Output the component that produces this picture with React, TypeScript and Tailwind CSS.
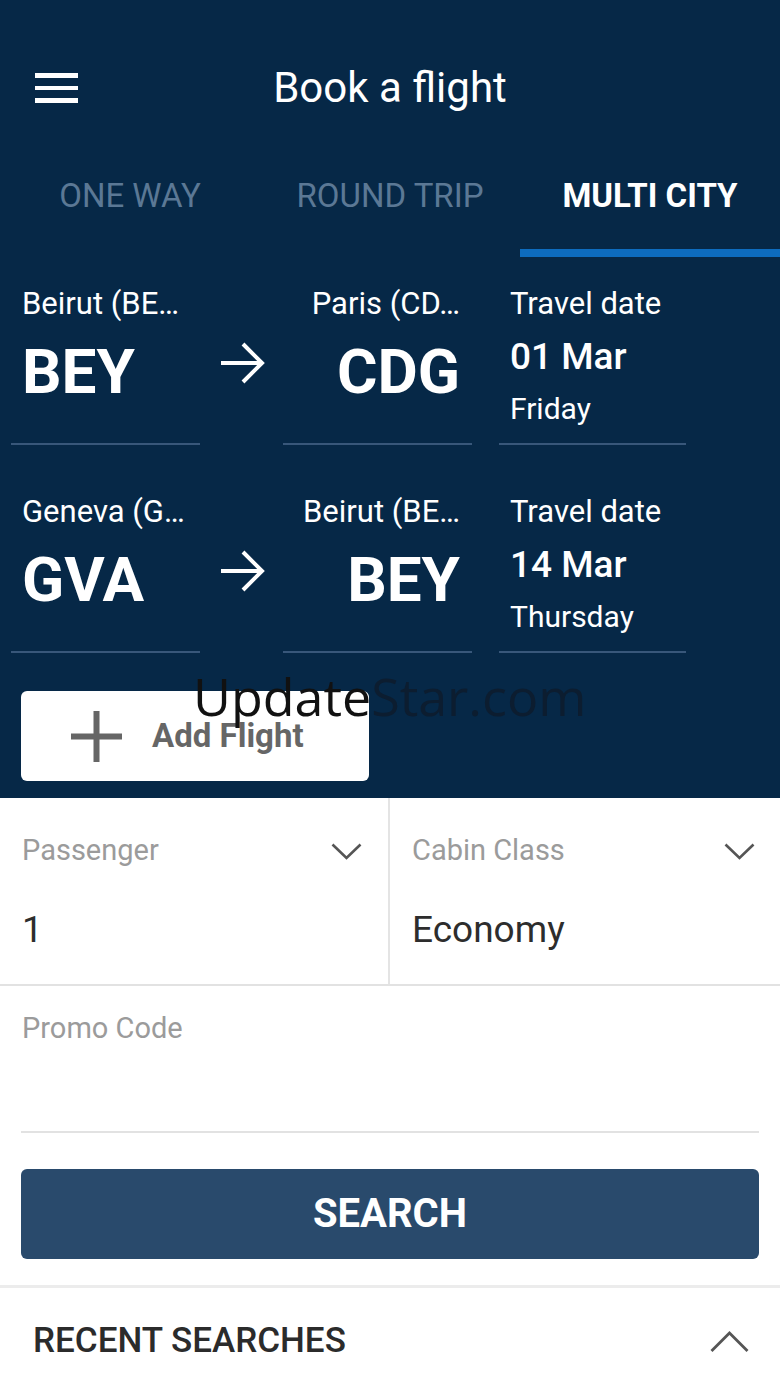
import React from 'react';

const navy = 'bg-[#062847]';

function Hamburger() {
  return (
    <div className="flex flex-col gap-[8px] w-[43px]">
      <span className="block h-[4.5px] bg-white" />
      <span className="block h-[4.5px] bg-white" />
      <span className="block h-[4.5px] bg-white" />
    </div>
  );
}

function ArrowIcon() {
  return (
    <svg width="46" height="44" viewBox="0 0 46 44" fill="none" stroke="white" strokeWidth="4">
      <path d="M2 22 H42" />
      <path d="M24 3 L43 22 L24 41" />
    </svg>
  );
}

function ChevronDown() {
  return (
    <svg width="31" height="17" viewBox="0 0 31 17" fill="none" stroke="#555" strokeWidth="2.6">
      <path d="M1.5 1.5 L15.5 15 L29.5 1.5" />
    </svg>
  );
}

function ChevronUp() {
  return (
    <svg width="39" height="22" viewBox="0 0 39 22" fill="none" stroke="#555" strokeWidth="2.8">
      <path d="M1.5 20 L19.5 2 L37.5 20" />
    </svg>
  );
}

function PlusIcon() {
  return (
    <svg width="51" height="51" viewBox="0 0 51 51" fill="#666">
      <rect x="22.5" y="0" width="6" height="51" />
      <rect x="0" y="22.5" width="51" height="6" />
    </svg>
  );
}

type Leg = { from: string; fromCode: string; to: string; toCode: string; date: string; day: string };

const legs: Leg[] = [
  { from: 'Beirut (BE…', fromCode: 'BEY', to: 'Paris (CD…', toCode: 'CDG', date: '01 Mar', day: 'Friday' },
  { from: 'Geneva (G…', fromCode: 'GVA', to: 'Beirut (BE…', toCode: 'BEY', date: '14 Mar', day: 'Thursday' },
];

function LegRow({ leg }: { leg: Leg }) {
  const line = 'border-b-2 border-[#38577a]';
  return (
    <div className="flex ml-[11px]">
      <div className={`w-[189px] h-[188px] pt-[29px] px-[11px] ${line}`}>
        <div className="text-[31px] leading-[36px] whitespace-nowrap">{leg.from}</div>
        <div className="mt-[18px] text-[62px] leading-[64px] font-bold">{leg.fromCode}</div>
      </div>
      <div className="w-[83px] flex justify-center pt-[84px]">
        <ArrowIcon />
      </div>
      <div className={`w-[189px] h-[188px] pt-[29px] px-[12px] text-right ${line}`}>
        <div className="text-[31px] leading-[36px] whitespace-nowrap">{leg.to}</div>
        <div className="mt-[18px] text-[62px] leading-[64px] font-bold">{leg.toCode}</div>
      </div>
      <div className={`ml-[27px] w-[187px] h-[188px] pt-[29px] px-[11px] ${line}`}>
        <div className="text-[31px] leading-[36px] whitespace-nowrap">Travel date</div>
        <div className="mt-[15px] text-[37px] leading-[40px] font-medium">{leg.date}</div>
        <div className="mt-[14px] text-[30px] leading-[36px]">{leg.day}</div>
      </div>
    </div>
  );
}

export default function App() {
  return (
    <div className="relative w-[780px] h-[1387px] overflow-hidden bg-white font-['Roboto','Liberation_Sans',sans-serif]">
      <div className={`${navy} text-white h-[798px]`}>
        <div className="relative flex items-center h-[112px] pt-[64px]">
          <div className="absolute left-[35px] top-[73px]">
            <Hamburger />
          </div>
          <div className="w-full text-center text-[42px] leading-[48px]">Book a flight</div>
        </div>

        <div className="grid grid-cols-3">
          {['ONE WAY', 'ROUND TRIP', 'MULTI CITY'].map((t, i) => (
            <div key={t} className="h-[145px] pt-[64px] flex flex-col">
              <div
                className={`text-center text-[33px] leading-[40px] ${
                  i === 2 ? 'font-bold text-white' : 'text-[#5b7895]'
                }`}
              >
                {t}
              </div>
              <div className={`mt-[33px] h-[8px] ${i === 2 ? 'bg-[#0d6cbf]' : ''}`} />
            </div>
          ))}
        </div>

        <LegRow leg={legs[0]} />
        <div className="mt-[20px]">
          <LegRow leg={legs[1]} />
        </div>

        <div className="mt-[38px] ml-[21px] w-[348px] h-[90px] bg-white rounded-[6px] flex items-center pl-[50px] gap-[30px]">
          <PlusIcon />
          <span className="text-[33px] font-bold text-[#666]">Add Flight</span>
        </div>
      </div>

      <div className="grid grid-cols-2 border-b-2 border-[#e2e2e2]">
        <div className="h-[186px] pt-[35px] pl-[22px] pr-[26px] border-r-2 border-[#e4e4e4]">
          <div className="flex items-center justify-between h-[36px]">
            <span className="text-[29px] text-[#9b9b9b]">Passenger</span>
            <ChevronDown />
          </div>
          <div className="mt-[39px] text-[37px] leading-[44px] text-[#2d2d2d]">1</div>
        </div>
        <div className="h-[186px] pt-[35px] pl-[22px] pr-[25px]">
          <div className="flex items-center justify-between h-[36px]">
            <span className="text-[29px] text-[#9b9b9b]">Cabin Class</span>
            <ChevronDown />
          </div>
          <div className="mt-[39px] text-[37px] leading-[44px] text-[#2d2d2d]">Economy</div>
        </div>
      </div>

      <div className="px-[21px]">
        <div className="pt-[24px] pl-[1px] h-[147px] border-b-2 border-[#e2e2e2]">
          <div className="text-[29px] leading-[36px] text-[#9b9b9b]">Promo Code</div>
        </div>
        <div className="mt-[36px] h-[90px] rounded-[6px] bg-[#294a6c] flex items-center justify-center text-white text-[40px] font-bold">
          SEARCH
        </div>
      </div>

      <div className="mt-[26px] border-t-[3px] border-[#ececec] flex items-center justify-between pl-[33px] pr-[31px] h-[110px]">
        <span className="text-[35px] font-medium text-[#2b2b2b]">RECENT SEARCHES</span>
        <span>
          <ChevronUp />
        </span>
      </div>

      {/* watermark overlay */}
      <div className="absolute left-[193px] top-[664px] text-[52px] leading-[64px] font-['Open_Sans',sans-serif] whitespace-nowrap pointer-events-none">
        <span className="text-[#111]">Update</span>
        <span className="text-[#0c1d30]">Star.com</span>
      </div>
    </div>
  );
}
